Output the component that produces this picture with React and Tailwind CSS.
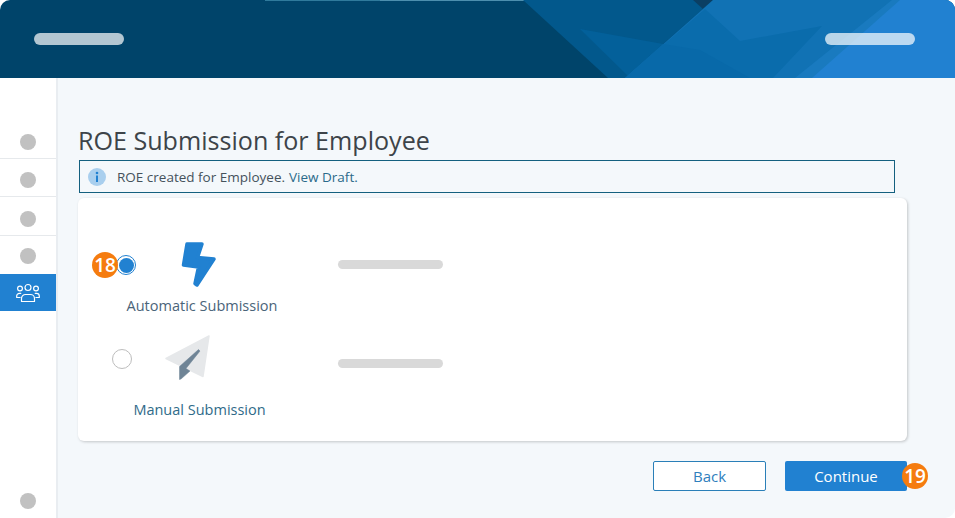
const font = { fontFamily: '"Open Sans", sans-serif' };

const HeaderArt = () => (
  <svg className="absolute inset-0" width="955" height="78" viewBox="0 0 955 78">
    <rect x="265" y="0" width="260" height="1" fill="#2f7a9c" />
    <rect x="380" y="0" width="250" height="1" fill="#4d8fae" />
    <polygon points="523,0 713,0 625,78 608,78" fill="#02588c" />
    <polygon points="580,29 663,44 628,76" fill="#03609a" />
    <polygon points="693,0 713,0 703,9" fill="#0b3f63" />
    <polygon points="713,0 955,0 955,78 625,78" fill="#1172b4" />
    <polygon points="705,9 740,41 822,26 773,78 625,78" fill="#0a6cac" />
    <polygon points="663,44 700,50 750,78 625,78" fill="#0869a9" />
    <polygon points="892,0 955,0 955,78 795,78" fill="#197abf" />
    <polygon points="900,0 955,0 955,78 812,78" fill="#2181d1" />
  </svg>
);

const GroupIcon = () => (
  <svg width="24" height="20" viewBox="0 0 24 20" fill="none" stroke="white" strokeWidth="1.2" strokeLinecap="round" strokeLinejoin="round">
    <circle cx="12" cy="4.5" r="3" />
    <circle cx="4" cy="5.5" r="2.4" />
    <circle cx="20" cy="5.5" r="2.4" />
    <path d="M5.5 18.5v-3a4 4 0 0 1 4-4h5a4 4 0 0 1 4 4v3z" />
    <path d="M4.8 10.3H3.5a2.8 2.8 0 0 0-2.8 2.8v1.4h3.4" />
    <path d="M19.2 10.3h1.3a2.8 2.8 0 0 1 2.8 2.8v1.4h-3.4" />
  </svg>
);

const NavDot = ({ className }) => (
  <div className={`flex items-center justify-center border-b border-[#e6e9ec] ${className}`}>
    <div className="w-4 h-4 rounded-full bg-[#c1c1c1]" />
  </div>
);

const Badge = ({ children, className }) => (
  <div className={`absolute w-[26px] h-[26px] rounded-full bg-[#f57c0f] text-white text-[19px] font-semibold flex items-center justify-center ${className}`}>
    {children}
  </div>
);

const Bolt = () => (
  <svg width="36" height="46" viewBox="0 0 36 46">
    <polygon
      points="6,2 21,2 16.5,15.5 33,17 16,43 14,41.5 17.5,25 2.5,23"
      fill="#2181d1"
      stroke="#2181d1"
      strokeWidth="3.5"
      strokeLinejoin="round"
    />
  </svg>
);

const Plane = () => (
  <svg width="46" height="46" viewBox="0 0 46 46">
    <polygon points="44,1 1,23.5 38,41.5" fill="#e6e8ea" stroke="#e6e8ea" strokeWidth="1.5" strokeLinejoin="round" />
    <polygon points="33.5,14.5 35,16 21,33.5 25,36 16,44 14.5,44.5 14.5,31.5" fill="#6f8496" stroke="#6f8496" strokeWidth="0.5" strokeLinejoin="round" />
  </svg>
);

const Pill = ({ className }) => <div className={`w-[105px] h-[9px] rounded-full bg-[#d9d9d9] ${className}`} />;

const App = () => {
  return (
    <div className="w-[955px] h-[518px] bg-white overflow-hidden flex flex-col" style={font}>
      {/* Header */}
      <div className="relative h-[78px] shrink-0 bg-[#00446a] rounded-t-[10px] overflow-hidden">
        <HeaderArt />
        <div className="relative h-full flex items-center justify-between px-[34px] pr-[40px]">
          <div className="w-[90px] h-3 rounded-full bg-white/70" />
          <div className="w-[90px] h-3 rounded-full bg-white/70" />
        </div>
      </div>

      <div className="flex flex-1 min-h-0">
        {/* Sidebar */}
        <div className="w-[58px] shrink-0 bg-white border-r-2 border-[#e9edf1] flex flex-col pt-[43px]">
          <NavDot className="h-[38px] pt-1" />
          <NavDot className="h-[38px] pt-1" />
          <NavDot className="h-[39px] pt-[5px]" />
          <div className="h-[38px] pt-[2px] flex items-center justify-center">
            <div className="w-4 h-4 rounded-full bg-[#c1c1c1]" />
          </div>
          <div className="h-[37px] bg-[#2181d1] flex items-center justify-center">
            <GroupIcon />
          </div>
          <div className="mt-auto h-[34px] flex items-center justify-center">
            <div className="w-4 h-4 rounded-full bg-[#c1c1c1]" />
          </div>
        </div>

        {/* Main */}
        <div className="relative flex-1 bg-[#f4f8fb] rounded-br-[10px] pl-5 pr-12 pt-[46px]">
          <h1 className="text-[25.1px] leading-[32px] text-[#3d4449]">ROE Submission for Employee</h1>
          <div className="mt-1 ml-px w-[816px] h-[33px] border border-[#14607f] flex items-center pl-2 pt-px text-[13.5px] text-[#45525c]">
            <svg width="18" height="18" viewBox="0 0 18 18" className="mr-[11px]">
              <circle cx="9" cy="9" r="9" fill="#a9cfee" />
              <circle cx="9" cy="5" r="1.3" fill="#2181d1" />
              <rect x="8" y="7.5" width="2" height="6.5" fill="#2181d1" />
            </svg>
            <span>ROE created for Employee.</span>
            <span className="ml-1 text-[#2a6a8a]">View Draft.</span>
          </div>

          {/* Options card */}
          <div className="mt-[5px] w-[829px] h-[243px] bg-white rounded-[6px] shadow-[1px_1px_3px_rgba(0,0,0,0.2)] pt-[44px]">
            <div className="flex">
              <div className="relative w-[49px] h-[45px]">
                <div className="absolute left-[38px] top-[13px] w-5 h-5 rounded-full border border-[#2181d1] bg-white p-[1.5px]">
                  <div className="w-full h-full rounded-full bg-[#2181d1]" />
                </div>
                <Badge className="left-[14px] top-[10px]">18</Badge>
              </div>
              <div className="w-[150px] flex flex-col items-center">
                <div className="pr-[6px]">
                  <Bolt />
                </div>
                <div className="mt-[8px] text-[14.5px] leading-5 text-[#4a6479] whitespace-nowrap">Automatic Submission</div>
              </div>
              <Pill className="ml-[61px] mt-[18px]" />
            </div>

            <div className="flex mt-[19px]">
              <div className="relative w-[56px] h-[45px]">
                <div className="absolute left-[34px] top-[14px] w-5 h-5 rounded-full border border-[#bdbdbd] bg-white" />
              </div>
              <div className="w-[131px] flex flex-col items-center">
                <div className="pr-[23px]">
                  <Plane />
                </div>
                <div className="mt-[19px] text-[14.5px] leading-5 text-[#2f6b89] whitespace-nowrap">Manual Submission</div>
              </div>
              <Pill className="ml-[73px] mt-[24px]" />
            </div>
          </div>

          {/* Actions */}
          <div className="mt-5 w-[829px] flex justify-end gap-[19px]">
            <button className="w-[113px] h-[30px] bg-white border border-[#2a7fb8] rounded-[2px] text-[15px] text-[#2f80bd]">Back</button>
            <div className="relative">
              <button className="w-[122px] h-[30px] bg-[#2181d1] rounded-[2px] text-[15px] text-white">Continue</button>
              <Badge className="left-[117px] top-[2px]">19</Badge>
            </div>
          </div>
        </div>
      </div>
    </div>
  );
};

export default App;
